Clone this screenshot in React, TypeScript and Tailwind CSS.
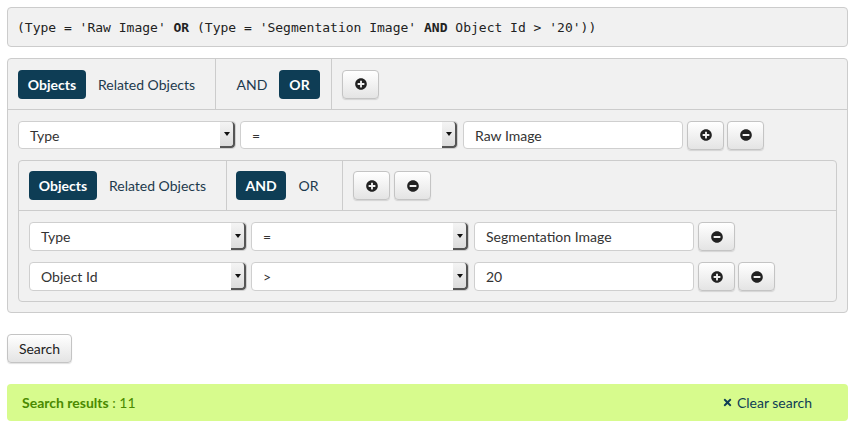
import { FaPlusCircle, FaMinusCircle, FaTimes } from 'react-icons/fa';

const SANS = { fontFamily: 'Lato, "Noto Sans", sans-serif' };

const Btn = ({ icon, w = 'w-[37px]' }: { icon: 'plus' | 'minus'; w?: string }) => (
  <button
    className={`${w} h-[29px] flex items-center justify-center rounded-[4px] border border-[#c4c4c4] bg-gradient-to-b from-[#ffffff] to-[#e4e4e4] shadow-[0_1px_1px_rgba(0,0,0,0.12)] text-[#222]`}
  >
    {icon === 'plus' ? <FaPlusCircle size={12} /> : <FaMinusCircle size={12} />}
  </button>
);

const Select = ({ value }: { value: string }) => (
  <div className="relative w-[218px] h-full rounded-[4px] border border-[#cfcfcf] bg-white flex items-center pl-[11px] text-[14px] text-[#333]">
    <span>{value}</span>
    <div className="absolute right-0 top-0 h-full w-[15px] rounded-r-[4px] bg-gradient-to-b from-[#f4f4f4] to-[#dcdcdc] border-r-2 border-b-2 border-[#555] flex items-center justify-center">
      <div className="w-0 h-0 border-l-[3px] border-r-[3px] border-t-[4px] border-l-transparent border-r-transparent border-t-[#111]" />
    </div>
  </div>
);

const Input = ({ value }: { value: string }) => (
  <div className="w-[220px] h-full rounded-[4px] border border-[#cfcfcf] bg-white flex items-center pl-[11px] text-[14px] text-[#333]">
    {value}
  </div>
);

const Toggle = ({ label, active, w }: { label: string; active?: boolean; w: string }) => (
  <div
    className={`${w} h-[29px] flex items-center justify-center rounded-[4px] text-[14px] ${
      active ? 'bg-[#0e3d55] text-white font-bold' : 'text-[#1d3a4d]'
    }`}
  >
    {label}
  </div>
);

type Row = { field: string; op: string; value: string; plus?: boolean };

const Header = ({ mode, minus, h }: { mode: 'AND' | 'OR'; minus?: boolean; h: string }) => (
  <div className={`flex ${h} border-b border-[#cccccc]`}>
    <div className="flex items-center pl-[10px] w-[208px] border-r border-[#cccccc]">
      <Toggle label="Objects" active w="w-[68px]" />
      <Toggle label="Related Objects" w="w-[121px]" />
    </div>
    <div className="flex items-center pl-[9px] w-[116px] border-r border-[#cccccc]">
      <Toggle label="AND" active={mode === 'AND'} w={mode === 'AND' ? 'w-[50px]' : 'w-[54px]'} />
      <Toggle label="OR" active={mode === 'OR'} w={mode === 'OR' ? 'w-[41px]' : 'w-[45px]'} />
    </div>
    <div className="flex items-center pl-[10px] gap-[4px]">
      <Btn icon="plus" />
      {minus && <Btn icon="minus" />}
    </div>
  </div>
);

const Condition = ({ row, h = 'h-[29px]' }: { row: Row; h?: string }) => (
  <div className={`flex items-center ${h}`}>
    <Select value={row.field} />
    <div className="w-[4px]" />
    <Select value={row.op} />
    <div className="w-[5px]" />
    <Input value={row.value} />
    <div className="w-[4px]" />
    {row.plus && (
      <>
        <Btn icon="plus" />
        <div className="w-[3px]" />
      </>
    )}
    <Btn icon="minus" />
  </div>
);

export default function App() {
  return (
    <div className="w-[859px] h-[427px] bg-white pt-[7px] pl-[7px]" style={SANS}>
      <div className="w-[841px]">
        <div className="h-[40px] rounded-[4px] border border-[#cccccc] bg-[#f1f1f1] flex items-center pl-[9px] pt-[1px]">
          <span className="text-[13px] text-[#222]" style={{ fontFamily: '"DejaVu Sans Mono", monospace' }}>
            (Type = 'Raw Image' <b>OR</b> (Type = 'Segmentation Image' <b>AND</b> Object Id &gt; '20'))
          </span>
        </div>

        <div className="mt-[11px] rounded-[4px] border border-[#cccccc] bg-[#f1f1f1] pb-[10px]">
          <Header mode="OR" h="h-[51px]" />
          <div className="px-[10px] pt-[11px]">
            <Condition row={{ field: 'Type', op: '=', value: 'Raw Image', plus: true }} h="h-[28px]" />

            <div className="mt-[11px] rounded-[4px] border border-[#cccccc] bg-[#f1f1f1]">
              <Header mode="AND" minus h="h-[50px]" />
              <div className="px-[10px] pt-[11px] pb-[10px] flex flex-col gap-[11px]">
                <Condition row={{ field: 'Type', op: '=', value: 'Segmentation Image' }} />
                <Condition row={{ field: 'Object Id', op: '>', value: '20', plus: true }} />
              </div>
            </div>
          </div>
        </div>

        <button className="mt-[21px] w-[65px] h-[29px] rounded-[4px] border border-[#c4c4c4] bg-gradient-to-b from-[#ffffff] to-[#e4e4e4] shadow-[0_1px_1px_rgba(0,0,0,0.12)] text-[14px] text-[#222]">
          Search
        </button>

        <div className="mt-[21px] h-[37px] rounded-[4px] bg-[#d7fb8d] flex items-center justify-between pl-[15px] pr-[36px] text-[14px]">
          <div className="text-[#4a8a00]">
            <span className="font-bold">Search results</span> : 11
          </div>
          <div className="flex items-center gap-[4px] text-[#0e3d55]">
            <FaTimes size={11} />
            <span>Clear search</span>
          </div>
        </div>
      </div>
    </div>
  );
}
